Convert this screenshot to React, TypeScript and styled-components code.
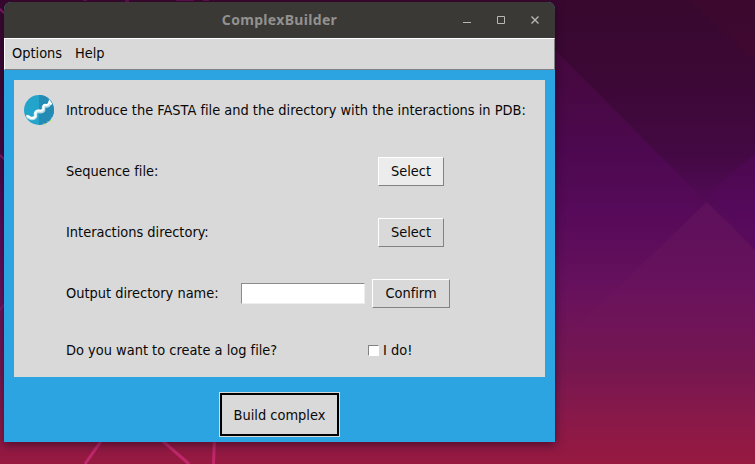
import React from "react";
import styled, { createGlobalStyle } from "styled-components";

const GlobalStyle = createGlobalStyle`
  * { box-sizing: border-box; }
  body { margin: 0; overflow: hidden; }
`;

const Desktop = styled.main`
  position: relative;
  width: 755px;
  height: 464px;
  padding: 2px 0 0 4px;
  overflow: hidden;
  font: 14.45px/18px "DejaVu Sans Condensed", "DejaVu Sans", sans-serif;
  font-stretch: condensed;
  font-variant-ligatures: none;
  color: #080808;
`;

const WallpaperArt = styled.svg`
  position: absolute;
  inset: 0;
`;

const Window = styled.section`
  position: relative;
  display: flex;
  flex-direction: column;
  width: 551px;
  height: 440px;
  border-radius: 7px 7px 0 0;
  background: #2ca4e2;
  box-shadow: 0 3px 10px rgba(20, 0, 20, 0.5);
`;

const TitleBar = styled.header`
  display: grid;
  grid-template-columns: 94px 1fr 94px;
  align-items: center;
  height: 36px;
  border-radius: 7px 7px 0 0;
  background: #3b3936;
`;

const Title = styled.h1`
  grid-column: 2;
  margin: 0;
  text-align: center;
  font: bold 14px/20px "Noto Sans", sans-serif;
  letter-spacing: 0.32px;
  color: #929190;
`;

const WindowControls = styled.svg`
  display: block;
`;

const MenuBar = styled.nav`
  display: flex;
  gap: 13px;
  height: 32px;
  padding: 5px 7px;
  border: 1px solid #828282;
  border-top-color: #fff;
  border-left-color: #fff;
  background: #d9d9d9;
`;

const MenuItem = styled.span<{ $width: number }>`
  width: ${(p) => p.$width}px;
  white-space: nowrap;
`;

const Panel = styled.div`
  display: grid;
  grid-template-rows: 60px 61px 61px 61px 54px;
  height: 297px;
  margin: 10px 10px 0;
  background: #d9d9d9;
`;

const Row = styled.div`
  display: flex;
  align-items: center;
  padding-left: 52px;
`;

const IntroRow = styled(Row)`
  gap: 12px;
  padding-left: 10px;
`;

const Label = styled.span<{ $width?: number }>`
  width: ${(p) => (p.$width ? `${p.$width}px` : "auto")};
  white-space: nowrap;
`;

const Button = styled.button<{ $width: number; $active?: boolean }>`
  width: ${(p) => p.$width}px;
  height: 29px;
  margin-top: 2px;
  padding: 0 0 2px;
  border: 1px solid #828282;
  border-top-color: #fff;
  border-left-color: #fff;
  background: ${(p) => (p.$active ? "#ececec" : "#d9d9d9")};
  color: inherit;
  font: inherit;
`;

const NameInput = styled.input`
  width: 124px;
  height: 21px;
  margin: 2px 7px 0 0;
  padding: 0 2px;
  border: 1px solid #eee;
  border-top-color: #8b8b8b;
  border-left-color: #8b8b8b;
  background: #fff;
  font: inherit;
`;

const CheckLabel = styled.label`
  display: flex;
  align-items: center;
  gap: 4px;
`;

const CheckBox = styled.input`
  appearance: none;
  width: 11px;
  height: 11px;
  margin: 0;
  border: 1px solid #fff;
  border-top-color: #828282;
  border-left-color: #828282;
  background: #fff;
`;

const Footer = styled.footer`
  display: flex;
  justify-content: center;
  padding-top: 15px;
`;

const BuildButton = styled.button`
  width: 121px;
  height: 45px;
  padding: 0;
  border: 1px solid #d9d9d9;
  outline: 2px solid #000;
  outline-offset: -3px;
  background: #d9d9d9;
  color: inherit;
  font: inherit;
`;

function Wallpaper() {
  return (
    <WallpaperArt width="755" height="464" viewBox="0 0 755 464" aria-hidden="true">
      <defs>
        <linearGradient id="sky" x1="0" y1="0" x2="0" y2="1">
          <stop offset="0" stopColor="#38082e" />
          <stop offset="0.18" stopColor="#3c0836" />
          <stop offset="0.33" stopColor="#430943" />
          <stop offset="0.45" stopColor="#540a58" />
          <stop offset="0.62" stopColor="#67115d" />
          <stop offset="0.8" stopColor="#771750" />
          <stop offset="0.89" stopColor="#87194a" />
          <stop offset="1" stopColor="#971940" />
        </linearGradient>
        <linearGradient id="facet" x1="0" y1="50" x2="0" y2="240" gradientUnits="userSpaceOnUse">
          <stop offset="0" stopColor="#52094b" stopOpacity="0.45" />
          <stop offset="0.6" stopColor="#58085e" stopOpacity="0.5" />
          <stop offset="1" stopColor="#5e0b5c" stopOpacity="0.2" />
        </linearGradient>
        <linearGradient id="rise" x1="0" y1="200" x2="0" y2="350" gradientUnits="userSpaceOnUse">
          <stop offset="0" stopColor="#70205f" stopOpacity="0.32" />
          <stop offset="1" stopColor="#7b1b55" stopOpacity="0" />
        </linearGradient>
      </defs>
      <path fill="url(#sky)" d="M0 0h755v464H0z" />
      <path fill="#48092e" opacity=".3" d="M690 0h65v62z" />
      <path fill="url(#facet)" d="M555 50 755 251H555z" />
      <path fill="#58075e" opacity=".4" d="m755 153-46 40 46 58z" />
      <path fill="url(#rise)" d="m707 202-149 143v119h197V250z" />
      <g fill="none" stroke="#851a74" strokeWidth="2">
        <path d="m0 9 5 5M0 155l6 6M0 310l6-8" />
        <path strokeWidth="1" d="M83 0h4m38 1h4m47-1h18m9 0h6" />
      </g>
      <g fill="none" stroke="#c0286c" strokeWidth="3">
        <path d="M104 437 85 464M158 437l31 27M214.500 437l-1 27" />
      </g>
    </WallpaperArt>
  );
}

function HelixLogo() {
  return (
    <svg width="30" height="30" viewBox="0 0 30 30" aria-hidden="true">
      <circle cx="15" cy="15" r="15" fill="#22a4cb" />
      <path fill="#248bb5" d="M15 0a15 15 0 0 1 0 30z" />
      <path d="M2.500 21.500c2.500 0 3 2 5.500 2s4-1.500 3.500-3.500.5-4 3.500-3.500 5-.5 4.500-3 1-3 3-2.500 2.500-1.500 4-3.500" fill="none" stroke="#b5dce7" strokeWidth="3.600" />
      <path d="M2.500 21c2.500 0 3 2 5.500 2s4-1.500 3.500-3.500.5-4.500 3.500-4 5-.5 4.500-3 1-3 3-2.500S25 8 25.500 6.500l2 3" fill="none" stroke="#fff" strokeWidth="2" />
      <path d="M19 29h2m2-2h1m3-4h1m-2 3h1" stroke="#a7d83d" />
    </svg>
  );
}

export default function App() {
  return (
    <>
      <GlobalStyle />
      <Desktop>
        <Wallpaper />
        <Window>
          <TitleBar>
            <Title>ComplexBuilder</Title>
            <WindowControls width="94" height="36" viewBox="0 0 94 36" fill="none" stroke="#b8b7b5">
              <path d="M2 20.500h8M36.500 14.500h7v7h-7z" />
              <path strokeWidth="1.400" d="m70.500 14.500 7 7m0-7-7 7" />
            </WindowControls>
          </TitleBar>
          <MenuBar>
            <MenuItem $width={50}>Options</MenuItem>
            <MenuItem $width={30}>Help</MenuItem>
          </MenuBar>
          <Panel>
            <IntroRow>
              <HelixLogo />
              <Label>Introduce the FASTA file and the directory with the interactions in PDB:</Label>
            </IntroRow>
            <Row>
              <Label $width={312}>Sequence file:</Label>
              <Button $width={66} $active>Select</Button>
            </Row>
            <Row>
              <Label $width={312}>Interactions directory:</Label>
              <Button $width={66}>Select</Button>
            </Row>
            <Row>
              <Label $width={175}>Output directory name:</Label>
              <NameInput aria-label="Output directory name" />
              <Button $width={78}>Confirm</Button>
            </Row>
            <Row>
              <Label $width={302}>Do you want to create a log file?</Label>
              <CheckLabel>
                <CheckBox type="checkbox" />
                I do!
              </CheckLabel>
            </Row>
          </Panel>
          <Footer>
            <BuildButton>Build complex</BuildButton>
          </Footer>
        </Window>
      </Desktop>
    </>
  );
}
